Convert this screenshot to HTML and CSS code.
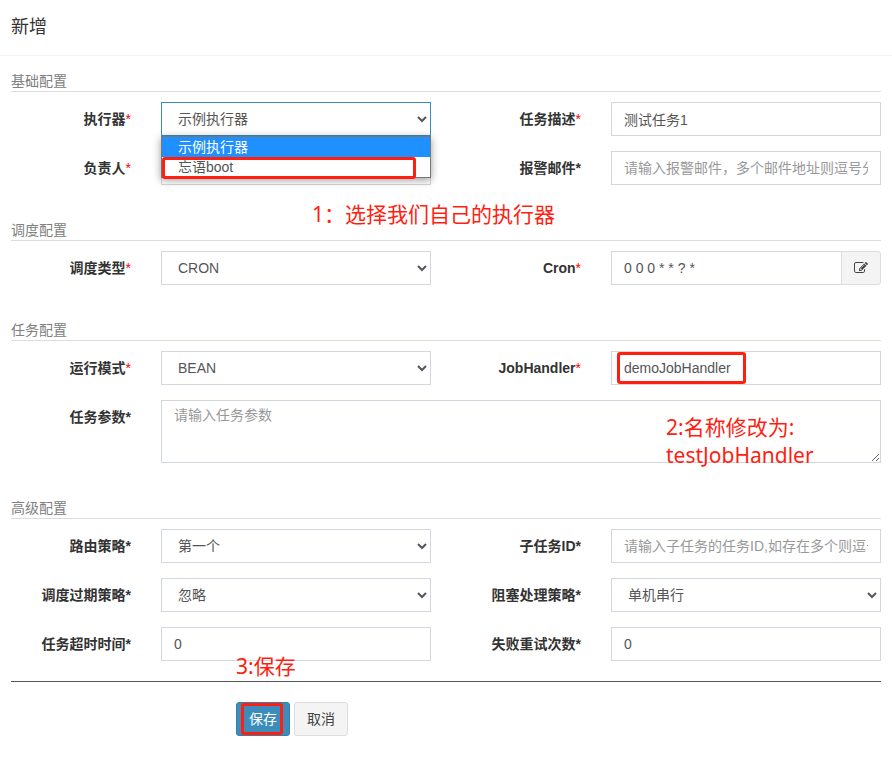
FILE: index.html
```html
<!DOCTYPE html>
<html lang="zh-CN">
<head>
    <meta charset="utf-8">
    <title>新增</title>

    <link rel="stylesheet" href="styles.css">
</head>
<body>
<div class="modal-header">
    <h4 class="modal-title">新增</h4>
</div>
<form class="modal-body">
    <section class="section">
        <h5 class="section-title">基础配置</h5>
        <div class="form-grid">
            <label class="control-label" for="jobGroup">执行器<span class="required">*</span></label>
            <div class="field">
                <select class="form-control active" id="jobGroup">
                    <option selected>示例执行器</option>
                    <option>忘语boot</option>
                </select>
                <ul class="dropdown">
                    <li class="dropdown-item selected">示例执行器</li>
                    <li class="dropdown-item">忘语boot</li>
                </ul>
                <span class="mark mark-option"></span>
            </div>
            <label class="control-label" for="jobDesc">任务描述<span class="required">*</span></label>
            <input class="form-control" type="text" id="jobDesc" value="测试任务1">

            <label class="control-label" for="author">负责人<span class="required">*</span></label>
            <input class="form-control" type="text" id="author">
            <label class="control-label" for="alarmEmail">报警邮件*</label>
            <input class="form-control" type="text" id="alarmEmail" placeholder="请输入报警邮件，多个邮件地址则逗号分隔">
        </div>
        <p class="note note-group">1：选择我们自己的执行器</p>
    </section>

    <section class="section">
        <h5 class="section-title">调度配置</h5>
        <div class="form-grid">
            <label class="control-label" for="scheduleType">调度类型<span class="required">*</span></label>
            <select class="form-control" id="scheduleType">
                <option>CRON</option>
            </select>
            <label class="control-label" for="cron">Cron<span class="required">*</span></label>
            <div class="input-group">
                <input class="form-control" type="text" id="cron" value="0 0 0 * * ? *">
                <button class="btn btn-addon" type="button" aria-label="Cron">
                    <svg width="14" height="14" viewBox="0 0 1792 1792" fill="currentColor"><path d="M888 1184l116-116-152-152-116 116v56h96v96h56zm440-720q-16-16-33 1l-350 350q-17 17-1 33t33-1l350-350q17-17 1-33zm80 594v190q0 119-84.5 203.5t-203.5 84.5h-832q-119 0-203.5-84.5t-84.5-203.5v-832q0-119 84.5-203.5t203.5-84.5h832q63 0 117 25 15 7 18 23 3 17-9 29l-49 49q-14 14-32 8-23-6-45-6h-832q-66 0-113 47t-47 113v832q0 66 47 113t113 47h832q66 0 113-47t47-113v-126q0-13 9-22l64-64q15-15 35-7t20 29zm-96-738l288 288-672 672h-288v-288zm444 132l-92 92-288-288 92-92q28-28 68-28t68 28l152 152q28 28 28 68t-28 68z"/></svg>
                </button>
            </div>
        </div>
    </section>

    <section class="section">
        <h5 class="section-title">任务配置</h5>
        <div class="form-grid">
            <label class="control-label" for="glueType">运行模式<span class="required">*</span></label>
            <select class="form-control" id="glueType">
                <option>BEAN</option>
            </select>
            <label class="control-label" for="handler">JobHandler<span class="required">*</span></label>
            <div class="field">
                <input class="form-control" type="text" id="handler" value="demoJobHandler">
                <span class="mark mark-handler"></span>
            </div>

            <label class="control-label" for="param">任务参数*</label>
            <div class="field field-wide">
                <textarea class="form-control textarea" id="param" placeholder="请输入任务参数"></textarea>
                <p class="note note-handler">2:名称修改为:<br>testJobHandler</p>
            </div>
        </div>
    </section>

    <section class="section">
        <h5 class="section-title">高级配置</h5>
        <div class="form-grid">
            <label class="control-label" for="route">路由策略*</label>
            <select class="form-control" id="route">
                <option>第一个</option>
            </select>
            <label class="control-label" for="childJob">子任务ID*</label>
            <input class="form-control" type="text" id="childJob" placeholder="请输入子任务的任务ID,如存在多个则逗号分隔">

            <label class="control-label" for="misfire">调度过期策略*</label>
            <select class="form-control" id="misfire">
                <option>忽略</option>
            </select>
            <label class="control-label" for="block">阻塞处理策略*</label>
            <select class="form-control" id="block">
                <option>单机串行</option>
            </select>

            <label class="control-label" for="timeout">任务超时时间*</label>
            <input class="form-control" type="text" id="timeout" value="0">
            <label class="control-label" for="retry">失败重试次数*</label>
            <input class="form-control" type="text" id="retry" value="0">
        </div>
    </section>

    <div class="actions">
        <button class="btn btn-primary" type="button">保存<span class="mark mark-save"></span></button>
        <button class="btn" type="button">取消</button>
        <p class="note note-save">3:保存</p>
    </div>
</form>
</body>
</html>
```
FILE: styles.css
```css
* {
    box-sizing: border-box;
}
body {
    margin: 0;
    background: #fff;
    color: #333;
    font-family: "Liberation Sans", "Noto Sans CJK SC", sans-serif;
    font-size: 14px;
    line-height: 20px;
}
.modal-header {
    padding: 15px 11px;
    border-bottom: 1px solid #f4f4f4;
}
.modal-title {
    margin: 0;
    font-size: 18px;
    font-weight: 400;
    line-height: 25px;
}
.modal-body {
    padding: 15px 11px;
}
.section {
    position: relative;
    margin-bottom: 35px;
}
.section-title {
    margin: 0 0 10px;
    border-bottom: 1px solid #ddd;
    color: #808080;
    font-size: 14px;
    font-weight: 400;
    line-height: 20px;
}
.form-grid {
    display: grid;
    grid-template-columns: minmax(0, 4fr) minmax(0, 9fr) minmax(0, 4fr) minmax(0, 9fr);
    gap: 15px 30px;
}
.control-label {
    padding-top: 7px;
    font-weight: 700;
    text-align: right;
    white-space: nowrap;
}
.required {
    color: red;
    font-weight: 400;
}
.field {
    position: relative;
}
.field-wide {
    grid-column: 2 / -1;
}
.form-control {
    display: block;
    width: 100%;
    height: 34px;
    margin: 0;
    padding: 6px 12px;
    border: 1px solid #d2d6de;
    border-radius: 0;
    outline: 0;
    background-color: #fff;
    color: #555;
    font: inherit;
}
.form-control::placeholder {
    color: #999;
}
.form-control.active {
    border-color: #3c8dbc;
}
.textarea {
    height: 63px;
    padding-top: 4px;
}
.input-group {
    display: flex;
}
.input-group .form-control {
    flex: 1;
    min-width: 0;
    border-right: 0;
}

/* open option list */
.dropdown {
    position: absolute;
    z-index: 1;
    top: 34px;
    left: 0;
    width: 100%;
    margin: 0;
    padding: 0;
    border: 1px solid #767676;
    background: #fff;
    box-shadow: 0 2px 8px rgba(0, 0, 0, 0.4);
    color: #555;
    list-style: none;
}
.dropdown-item {
    height: 20px;
    padding: 0 16px;
    line-height: 20px;
}
.dropdown-item.selected {
    background: #1e90ff;
    color: #fff;
}

.btn {
    position: relative;
    height: 34px;
    padding: 6px 12px;
    border: 1px solid #ddd;
    border-radius: 3px;
    background: #f4f4f4;
    color: #444;
    font: inherit;
}
.btn-primary {
    border-color: #367fa9;
    background: #3c8dbc;
    color: #fff;
}
.btn-addon {
    display: flex;
    align-items: center;
    width: 40px;
    border-radius: 0 3px 3px 0;
}
.actions {
    position: relative;
    display: flex;
    gap: 4px;
    margin-top: -15px;
    padding: 20px 0 0 225px;
    border-top: 1px solid #555;
}

/* step marks and notes */
.mark {
    position: absolute;
    z-index: 2;
    border: 3px solid #ff1e10;
    border-radius: 3px;
    pointer-events: none;
}
.mark-option {
    top: 55px;
    left: 1px;
    width: 254px;
    height: 22px;
}
.mark-handler {
    top: 1px;
    left: 6px;
    width: 129px;
    height: 32px;
}
.mark-save {
    top: 0;
    left: 4px;
    width: 42px;
    height: 32px;
}
.note {
    position: absolute;
    margin: 0;
    color: #ff1e10;
    font-family: "Noto Sans", "Noto Sans CJK SC", sans-serif;
    font-size: 21px;
    line-height: 28px;
    white-space: nowrap;
    pointer-events: none;
}
.note-group {
    top: 129px;
    left: 301px;
}
.note-handler {
    top: 13px;
    left: 505px;
}
.note-save {
    top: -30px;
    left: 225px;
}
```
